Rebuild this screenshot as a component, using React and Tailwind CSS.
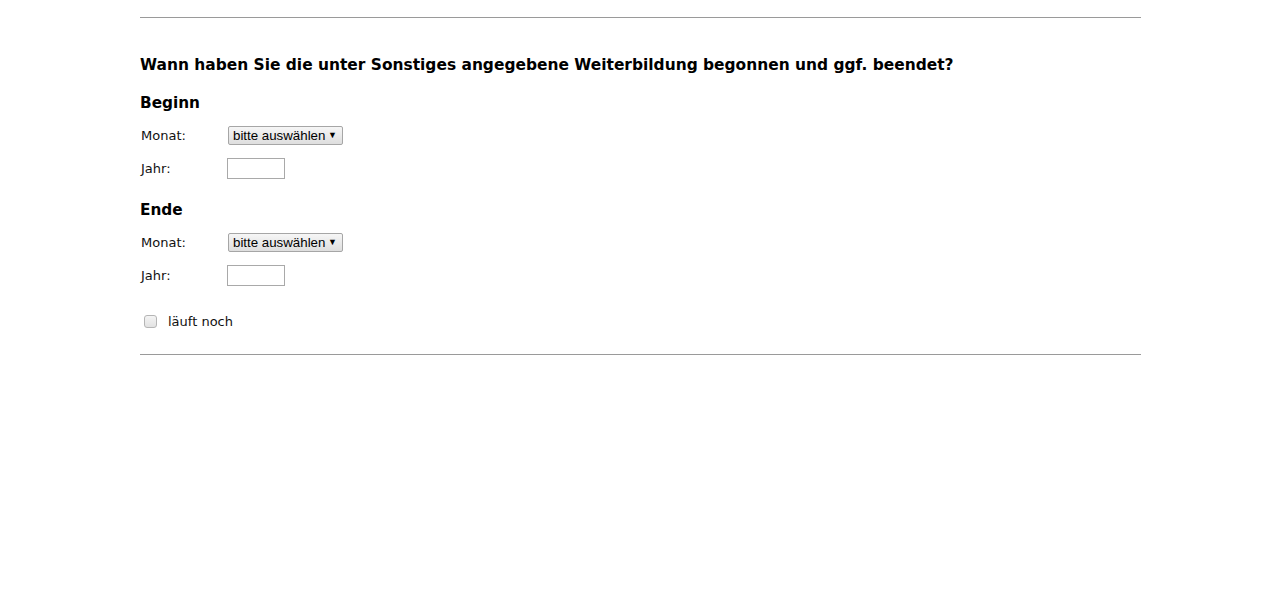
import React from "react";

function FakeSelect() {
  return (
    <div className="flex h-[19px] w-[115px] items-center justify-between rounded-[2px] border border-[#a6a6a6] bg-gradient-to-b from-[#f6f6f6] to-[#dedede] pl-[4px] pr-[5px] text-[13.3px] leading-none text-black" style={{ fontFamily: '"Liberation Sans", Arial, sans-serif' }}>
      <span>bitte auswählen</span>
      <span className="text-[9px]">▼</span>
    </div>
  );
}

function Row({ label, children }) {
  return (
    <div className="flex h-[21px] items-center">
      <span className="w-[87px] pl-[1px] text-[13px] text-[#111]">{label}</span>
      {children}
    </div>
  );
}

function Block({ title }) {
  return (
    <div>
      <h3 className="h-[22px] text-[15.3px] font-bold leading-[22px] text-black">{title}</h3>
      <div className="mt-[11px] flex flex-col gap-[12px]">
        <Row label="Monat:">
          <div className="ml-[1px]"><FakeSelect /></div>
        </Row>
        <Row label="Jahr:">
          <input type="text" className="h-[21px] w-[58px] border border-[#a9a9a9] bg-white outline-none" />
        </Row>
      </div>
    </div>
  );
}

export default function App() {
  return (
    <div className="min-h-[601px] bg-white" style={{ fontFamily: '"DejaVu Sans", Verdana, sans-serif' }}>
      <div className="ml-[140px] w-[1001px] pt-[17px]">
        <div className="h-px bg-[#9a9a9a]" />
        <h2 className="mt-[36px] h-[22px] text-[15.45px] font-bold leading-[22px] text-black">
          Wann haben Sie die unter Sonstiges angegebene Weiterbildung begonnen und ggf. beendet?
        </h2>
        <div className="mt-[16px]">
          <Block title="Beginn" />
        </div>
        <div className="mt-[20px]">
          <Block title="Ende" />
        </div>
        <div className="mt-[25px] flex h-[21px] items-center">
          <span className="ml-[4px] h-[13px] w-[13px] rounded-[3px] border border-[#b5b5b5] bg-gradient-to-b from-[#f4f4f4] to-[#e2e2e2]" />
          <span className="ml-[11px] text-[13px] text-[#111]">läuft noch</span>
        </div>
        <div className="mt-[22px] h-px bg-[#9a9a9a]" />
      </div>
    </div>
  );
}
